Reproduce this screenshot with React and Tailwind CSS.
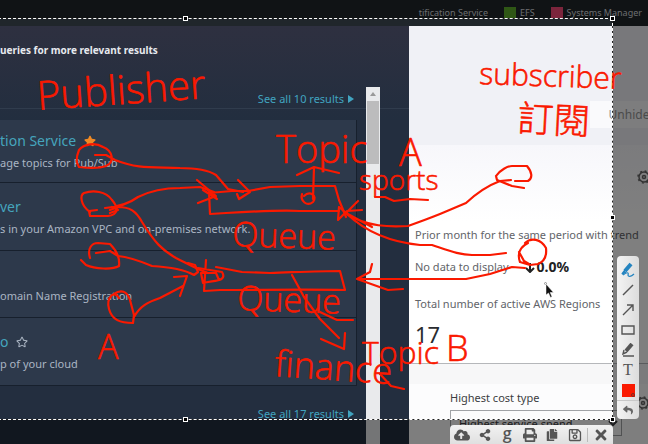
import React from "react";
import { FaCloudUploadAlt, FaShareAlt, FaPrint, FaCopy, FaRegSave, FaTimes, FaStar, FaRegStar, FaReply } from "react-icons/fa";

const services = [
  { title: "tion Service", text: "age topics for Pub/Sub", star: "full", height: "h-[63px]" },
  { title: "ver", text: "s in your Amazon VPC and on-premises network.", height: "h-[68px]" },
  { title: "", text: "omain Name Registration", height: "h-[67px]" },
  { title: "o", text: "p of your cloud", star: "empty", height: "h-[68px]" },
];

function ServiceRow({ title, text, star, height }) {
  return (
    <li className={`${height} mr-[52px] flex flex-col justify-center gap-1 border-r border-b border-[#17202d] bg-[#2d394b]`}>
      <div className="flex h-5 items-center gap-2 text-[14px] leading-5 text-[#45a5bd]">
        {title && <a href="#service">{title}</a>}
        {star === "full" && <FaStar className="size-3 text-[#f08a24]" />}
        {star === "empty" && <FaRegStar className="size-3 text-[#aab4c2]" />}
      </div>
      <p className="text-[11px] leading-4 text-[#aab5c3]">{text}</p>
    </li>
  );
}

function SeeAll({ children }) {
  return (
    <a href="#results" className="flex items-center gap-1 text-[11px] leading-4 text-[#41a4c0]">
      {children}
      <svg viewBox="0 0 6 8" className="h-2 w-1.5" fill="currentColor"><path d="M0 0L6 4L0 8Z" /></svg>
    </a>
  );
}

function SearchPanel() {
  return (
    <section className="relative w-[409px] shrink-0 bg-[#232e3f] whitespace-nowrap">
      <div className="flex h-[94px] flex-col bg-linear-to-b from-[#2e3040] to-[#222e3f] pt-4">
        <p className="text-[10px] leading-4 font-bold text-[#e6e9ee]">ueries for more relevant results</p>
        <div className="mt-[31px] flex h-5 justify-end border-b border-[#303c4d] pr-[55px]">
          <SeeAll>See all 10 results</SeeAll>
        </div>
      </div>
      <ul>
        {services.map((s) => <ServiceRow key={s.text} {...s} />)}
      </ul>
      <div className="flex justify-end pt-5 pr-[55px]">
        <SeeAll>See all 17 results</SeeAll>
      </div>
      <div className="absolute top-[61px] right-[29px] bottom-0 flex w-3.5 flex-col items-center bg-[#e9eaec]">
        <svg viewBox="0 0 6 4" className="my-[5px] h-1 w-1.5" fill="#999"><path d="M3 0L6 4H0Z" /></svg>
        <div className="h-[63px] w-3 bg-[#bcbcbd]" />
      </div>
    </section>
  );
}

function Gear({ className }) {
  return (
    <svg viewBox="0 0 14 14" className={`size-3.5 ${className}`} fill="none" stroke="#666" strokeWidth="1.5">
      <circle cx="7" cy="7" r="5" />
      <circle cx="7" cy="7" r="1.5" />
      <circle cx="7" cy="7" r="6" strokeDasharray="2 2.7" />
    </svg>
  );
}

function Dashboard() {
  return (
    <main className="relative min-w-0 flex-1 bg-[#fcfcfd] text-[11px] whitespace-nowrap text-[#626469]">
      <div className="flex h-[119px] items-end justify-end bg-[#f0f1f6] pb-[17px]">
        <button className="-mr-1 h-[27px] w-[62px] bg-[#fafafc] pl-4 text-[12px] text-[#969696]">Unhide</button>
      </div>
      <div className="h-[219px] border-b border-[#b5b7ba] bg-linear-to-b from-[#f7f7fb] to-white to-35% pl-1.5">
        <Gear className="ml-[222px] translate-y-[25px]" />
        <p className="mt-[68px] leading-4">Prior month for the same period with trend</p>
        <p className="mt-4 flex h-4 items-center leading-4">
          No data to display
          <svg viewBox="0 0 10 10" className="mt-0.5 ml-4 size-2.5" fill="none" stroke="#222" strokeWidth="2"><path d="M5 0V9M1 5L5 9L9 5" /></svg>
          <strong className="ml-0.5 text-[14px] text-[#222]">0.0%</strong>
        </p>
        <p className="mt-[21px] leading-4">Total number of active AWS Regions</p>
        <p className="mt-2 text-[22px] leading-7 text-[#292b2f]">17</p>
      </div>
      <div className="h-5 bg-[#f7f7f8]" />
      <div className="flex pl-[41px]">
        <div>
          <label htmlFor="cost-type" className="block pt-1.5 leading-4 text-[#3c3e42]">Highest cost type</label>
          <select id="cost-type" className="mt-1 h-[26px] w-[172px] border border-[#a0a2a5] bg-[#fcfcfc] pl-1 text-[11px] text-[#3a3b3e]">
            <option>Highest service spend</option>
          </select>
        </div>
        <Gear className="mt-3 ml-[14px] shrink-0" />
      </div>
    </main>
  );
}

const strokes = [
  "M79 150C84 144 95 142 103 147C113 151 115 162 106 166C98 169 88 168 79 167C75 162 77 155 79 150M95 155L106 155L115 160C138 169 150 167 180 168C196 168 208 170 216 175L228 189L243 192",
  "M238 180L250 192L239 199M239 199L237 194",
  "M90 212C80 205 80 195 84 193C93 190 106 191 112 200C119 208 118 215 108 216L90 216L89 211L97 210M105 208C118 207 130 203 138 197C152 190 164 188 180 188L200 187L214 192",
  "M197 180L216 196L198 203M203 190L217 199L207 189M209 192L210 214L226 213C260 211 280 210 300 211L339 211M209 193L232 191L248 191L270 187L300 186L335 186L339 200L346 217",
  "M110 210L118 207C130 207 136 211 142 222C155 243 162 250 176 258C188 264 198 270 208 273M112 207L118 210L110 213",
  "M90 258C87 248 92 243 98 243L110 244C116 250 120 258 119 266C112 270 95 269 86 265L81 260M96 253L110 251L118 256C130 257 140 261 152 266C170 267 185 270 194 275L198 272L195 265L188 263",
  "M119 298C114 289 106 298 109 309C112 320 120 323 133 323L134 315L130 300C127 291 121 289 114 294M134 317C140 306 148 302 160 298L183 286M174 277L187 276L180 296",
  "M206 260L204 291L220 290C260 290 310 289 345 290L340 271C320 271 300 272 270 273L242 272L216 267M198 268L222 272C228 282 213 280 203 283L201 273L216 273L219 280",
  "M313 199L314 167M297 175L314 167L339 173M302 194C300 201 307 207 313 202C318 196 310 190 304 196",
  "M347 214C367 227 390 227 408 226C422 221 430 218 440 214L466 203C480 190 492 184 500 181L511 180M358 201L346 213L339 207L338 220L347 211L362 210M346 213L372 227",
  "M347 214C366 232 390 242 420 245L432 245C450 251 460 255 472 255L490 255L506 253",
  "M525 268L512 267L490 274L466 279L357 279M372 264L370 272L357 279L388 290L403 289",
  "M496 176C500 170 508 166 512 166L527 166C532 172 533 178 528 181L515 181M496 176L497 180L512 186L524 188",
  "M525 243C531 237 541 239 546 248C547 257 543 262 538 264L530 265L520 262C517 254 520 247 528 243M519 252L524 261L529 264",
  "M292 275L304 297L320 319L339 338M321 339L344 349L345 333M320 312L337 320L353 320",
  "M375 197L385 197L394 201L410 199L428 200M380 374L391 386L404 389",
];

const notes = [
  { text: "Publisher", x: 38, y: 110, size: 40, turn: -4 },
  { text: "Topic", x: 276, y: 163, size: 38, turn: 0 },
  { text: "A", x: 399, y: 166, size: 38, turn: 0 },
  { text: "sports", x: 359, y: 190, size: 28, turn: 0 },
  { text: "Queue", x: 232, y: 246, size: 34, turn: 2 },
  { text: "Queue", x: 237, y: 310, size: 34, turn: 2 },
  { text: "finance", x: 274, y: 376, size: 36, turn: 4 },
  { text: "Topic", x: 362, y: 364, size: 32, turn: 0 },
  { text: "B", x: 446, y: 361, size: 36, turn: 0 },
  { text: "A", x: 98, y: 359, size: 34, turn: 0 },
  { text: "subscriber", x: 479, y: 84, size: 30, turn: 2 },
  { text: "訂閱", x: 517, y: 131, size: 36, turn: 3 },
];

function Ink() {
  return (
    <svg className="absolute inset-0 h-full w-full overflow-visible" fill="none" stroke="#fa1900" strokeWidth="2.2" strokeLinecap="round" strokeLinejoin="round">
      {strokes.map((d) => <path key={d} d={d} />)}
      <g fill="#fa1900" strokeWidth="0.6" className="font-['Open_Sans','Noto_Sans_CJK_TC',sans-serif] font-light">
        {notes.map((n) => (
          <text key={n.text + n.y} x={n.x} y={n.y} fontSize={n.size} transform={`rotate(${n.turn} ${n.x} ${n.y})`}>{n.text}</text>
        ))}
      </g>
    </svg>
  );
}

function Tool({ label, children }) {
  return (
    <button aria-label={label} className="flex size-5 items-center justify-center text-[#555]">{children}</button>
  );
}

function Drawn({ children }) {
  return <svg viewBox="0 0 14 14" className="size-3.5" fill="none" stroke="currentColor" strokeWidth="1.4">{children}</svg>;
}

function DrawingTools() {
  return (
    <div className="absolute right-[9px] bottom-[25px] flex w-[22px] flex-col items-center rounded-sm bg-linear-to-r from-[#f4f4f4] to-[#dcdcdc] pt-1">
      <Tool label="Pen">
        <svg viewBox="0 0 14 16" className="h-4 w-3.5" fill="none" stroke="#2484c0">
          <path d="M10 2L4 9" strokeWidth="4" />
          <path d="M4 8L1 12L5 10" strokeWidth="1.5" />
          <path d="M2 13C6 10 8 10 7 13C7 15 10 15 13 12" strokeWidth="1.2" />
        </svg>
      </Tool>
      <Tool label="Line"><Drawn><path d="M2 12L12 2" /></Drawn></Tool>
      <Tool label="Arrow"><Drawn><path d="M2 12L12 2M6 2H12V8" /></Drawn></Tool>
      <Tool label="Rectangle"><Drawn><path d="M1 3H13V11H1Z" /></Drawn></Tool>
      <Tool label="Marker"><Drawn><path d="M11 1L5 8" strokeWidth="4" /><path d="M3 7L2 11L6 9M2 13H13" /></Drawn></Tool>
      <Tool label="Text"><span className="font-['Liberation_Serif',serif] text-[16px] leading-4">T</span></Tool>
      <Tool label="Colour">
        <span className="flex size-[13px] items-end justify-end bg-[#fa1900]"><span className="size-1 rounded-full border border-[#7e2a22]" /></span>
      </Tool>
      <div className="w-full border-t border-[#c8c8c8]">
        <button aria-label="Undo" className="mx-auto flex h-[18px] w-5 items-center justify-center text-[#666]"><FaReply className="size-2.5" /></button>
      </div>
    </div>
  );
}

function ActionTools() {
  return (
    <div className="absolute right-[35px] -bottom-1 flex h-[23px] w-[163px] items-center justify-between rounded-sm bg-linear-to-b from-[#f2f2f2] to-[#dcdcdc] px-0.5 pb-1">
      <Tool label="Upload"><FaCloudUploadAlt className="size-4" /></Tool>
      <Tool label="Share"><FaShareAlt className="size-3" /></Tool>
      <Tool label="Search image"><span className="pb-1 font-['Open_Sans',sans-serif] text-[16px] leading-4 font-semibold">g</span></Tool>
      <Tool label="Print"><FaPrint className="size-3.5" /></Tool>
      <Tool label="Copy"><FaCopy className="size-3" /></Tool>
      <Tool label="Save"><FaRegSave className="size-3.5" /></Tool>
      <span className="h-3.5 w-px bg-[#bbb]" />
      <Tool label="Close"><FaTimes className="size-4" /></Tool>
    </div>
  );
}

function Selection() {
  const handle = "absolute size-[5px] border border-white bg-black";
  return (
    <div className="absolute top-[18px] right-[35px] bottom-6 -left-0.5 shadow-[0_0_0_999px_rgba(0,0,0,0.5)]">
      <div className="absolute inset-0 border border-[#222]" />
      <div className="absolute inset-0 border border-dashed border-white" />
      <span className={`${handle} -top-0.5 left-[30%]`} />
      <span className={`${handle} -top-0.5 -right-0.5`} />
      <span className={`${handle} top-[49%] -right-0.5`} />
      <span className={`${handle} -right-0.5 -bottom-0.5`} />
      <span className={`${handle} -bottom-0.5 left-[30%]`} />
    </div>
  );
}

export default function App() {
  return (
    <div className="relative flex h-screen flex-col overflow-hidden bg-[#232e3f] font-['Noto_Sans',sans-serif]">
      <nav className="flex h-[26px] shrink-0 items-center justify-end gap-4 bg-[#20262b] pr-1.5 text-[9px] whitespace-nowrap text-[#d5d9de]">
        <a href="#notification">tification Service</a>
        <a href="#efs" className="flex items-center gap-1"><span className="size-3 bg-[#5fae2a]" />EFS</a>
        <a href="#systems" className="flex items-center gap-1"><span className="size-3 bg-[#f84a78]" />Systems Manager</a>
      </nav>
      <div className="flex min-h-0 flex-1">
        <SearchPanel />
        <Dashboard />
      </div>
      <Selection />
      <Ink />
      <DrawingTools />
      <ActionTools />
      <svg viewBox="0 0 10 16" className="absolute top-[282px] left-[544px] h-4 w-2.5" fill="#111" stroke="#fff" strokeWidth="0.5">
        <circle cx="1.5" cy="1.5" r="1" fill="none" stroke="#444" />
        <path d="M2 2V13L4.500 11L6.500 15.500L8 14.800L6.200 10.500H9.500Z" />
      </svg>
    </div>
  );
}
